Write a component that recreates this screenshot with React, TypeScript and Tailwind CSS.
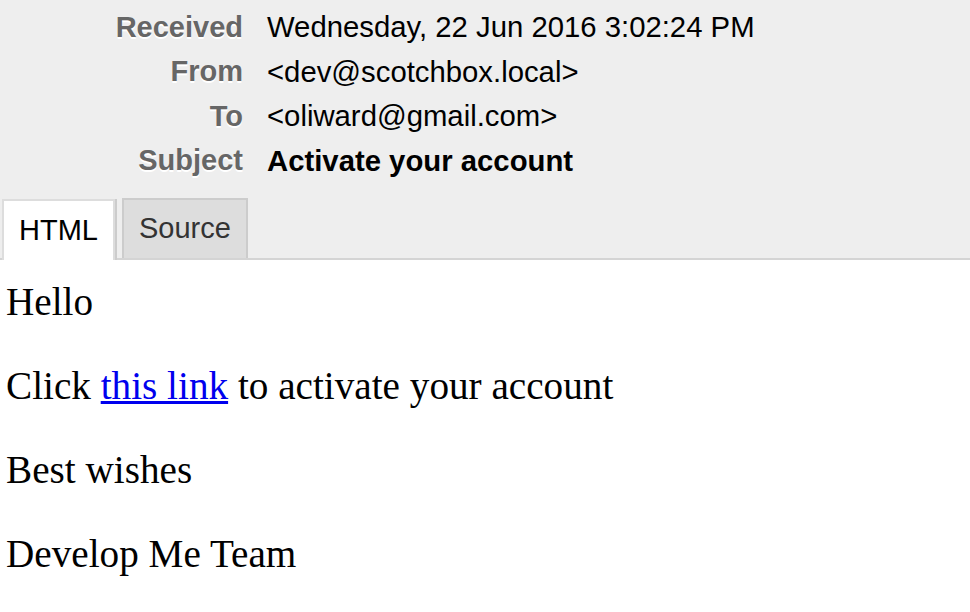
export default function App() {
  const rows = [
    { label: 'Received', value: 'Wednesday, 22 Jun 2016 3:02:24 PM' },
    { label: 'From', value: '<dev@scotchbox.local>' },
    { label: 'To', value: '<oliward@gmail.com>' },
    { label: 'Subject', value: 'Activate your account', bold: true },
  ];

  return (
    <div className="w-[970px] h-[612px] overflow-hidden bg-white">
      <div className="bg-[#eeeeee] border-b-2 border-[#d4d4d4] pt-[5px] font-['Liberation_Sans',Arial,sans-serif]">
        <div className="flex flex-col">
          {rows.map(r => (
            <div key={r.label} className="flex items-center h-[44.5px]">
              <span className="w-[243px] text-right text-[29px] font-bold text-[#666666] [text-shadow:0_2px_0_#ffffff]">
                {r.label}
              </span>
              <span className={`ml-[24px] text-[29.3px] text-black ${r.bold ? 'font-bold' : ''}`}>{r.value}</span>
            </div>
          ))}
        </div>
        <div className="flex items-end gap-[7px] pl-[2px] mt-[15px] -mb-[2px]">
          <div className="h-[61px] px-[15px] flex items-center bg-white border-2 border-b-0 border-[#dddddd] text-[29px] text-black shadow-[2px_0_0_#cccccc]">
            HTML
          </div>
          <div className="h-[60px] mb-[2px] px-[15px] flex items-center bg-[#dddddd] border-2 border-b-0 border-[#cccccc] text-[29px] text-[#333333]">
            Source
          </div>
        </div>
      </div>
      <div className="px-[6px] pt-[20px] font-['Liberation_Serif','Times_New_Roman',serif] text-[39.2px] text-black leading-[44px]">
        <p className="mb-[40px]">Hello</p>
        <p className="mb-[40px]">
          Click <a href="#" className="text-[#0000ee] underline">this link</a> to activate your account
        </p>
        <p className="mb-[40px]">Best wishes</p>
        <p>Develop Me Team</p>
      </div>
    </div>
  );
}
